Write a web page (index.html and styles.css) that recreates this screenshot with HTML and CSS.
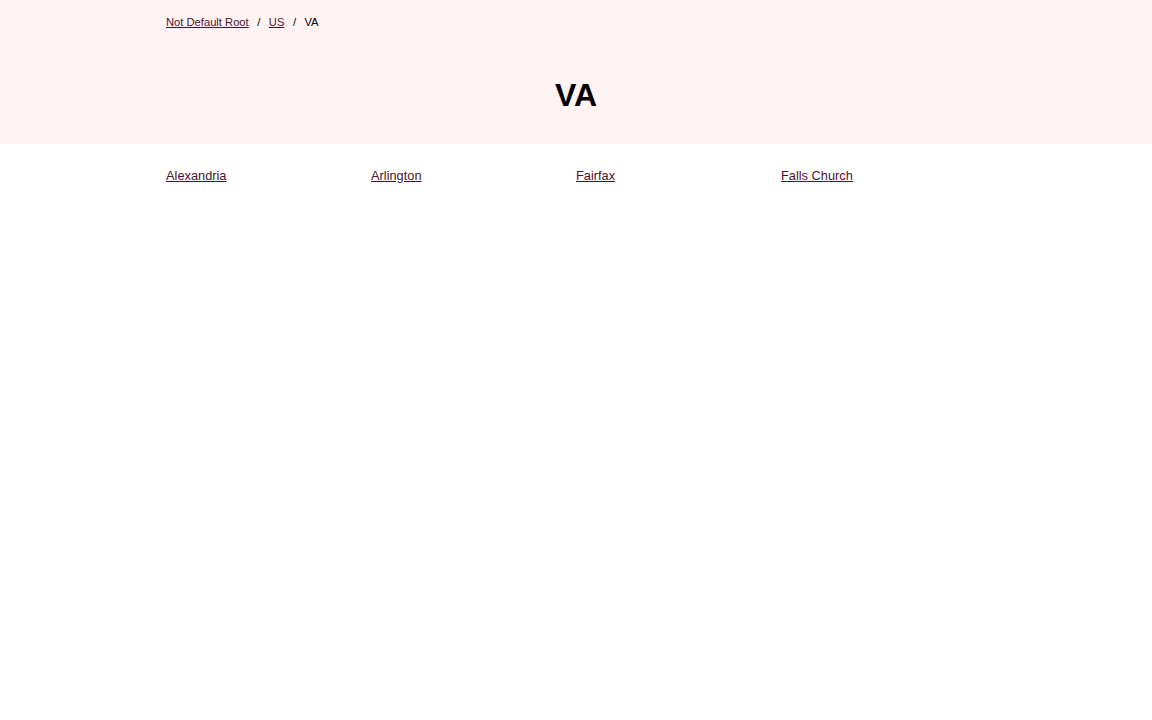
FILE: index.html
```html
<!DOCTYPE html>
<html>
<head>
<meta charset="utf-8">
<link rel="stylesheet" href="styles.css">
</head>
<body>
<header class="hero">
  <div class="container">
    <nav class="crumbs">
      <a href="#">Not Default Root</a><span class="sep">/</span><a href="#">US</a><span class="sep">/</span><span class="current">VA</span>
    </nav>
    <h1 class="title">VA</h1>
  </div>
</header>
<main class="container">
  <ul class="grid">
    <li><a href="#">Alexandria</a></li>
    <li><a href="#">Arlington</a></li>
    <li><a href="#">Fairfax</a></li>
    <li><a href="#">Falls Church</a></li>
  </ul>
</main>
</body>
</html>
```
FILE: styles.css
```css
html, body { margin: 0; padding: 0; background: #fff; }
body { font-family: "Liberation Sans", Arial, sans-serif; color: #000; }
.container { width: 820px; margin: 0 auto; }
.hero { background: #fff3f3; height: 144px; }
.hero .container { padding-top: 15px; }
.crumbs { font-size: 11.2px; line-height: 14px; display: flex; align-items: center; }
.crumbs a { color: #520f2d; }
.sep { margin: 0 8.5px; }
.current { color: #000; }
.title { text-align: center; font-size: 32px; font-weight: bold; margin: 48px 0 0; line-height: 37px; }
.grid { list-style: none; margin: 0; padding: 24px 0 0; display: grid; grid-template-columns: repeat(4, 205px); font-size: 12.8px; line-height: 15px; }
.grid a { color: #520f2d; }
```
